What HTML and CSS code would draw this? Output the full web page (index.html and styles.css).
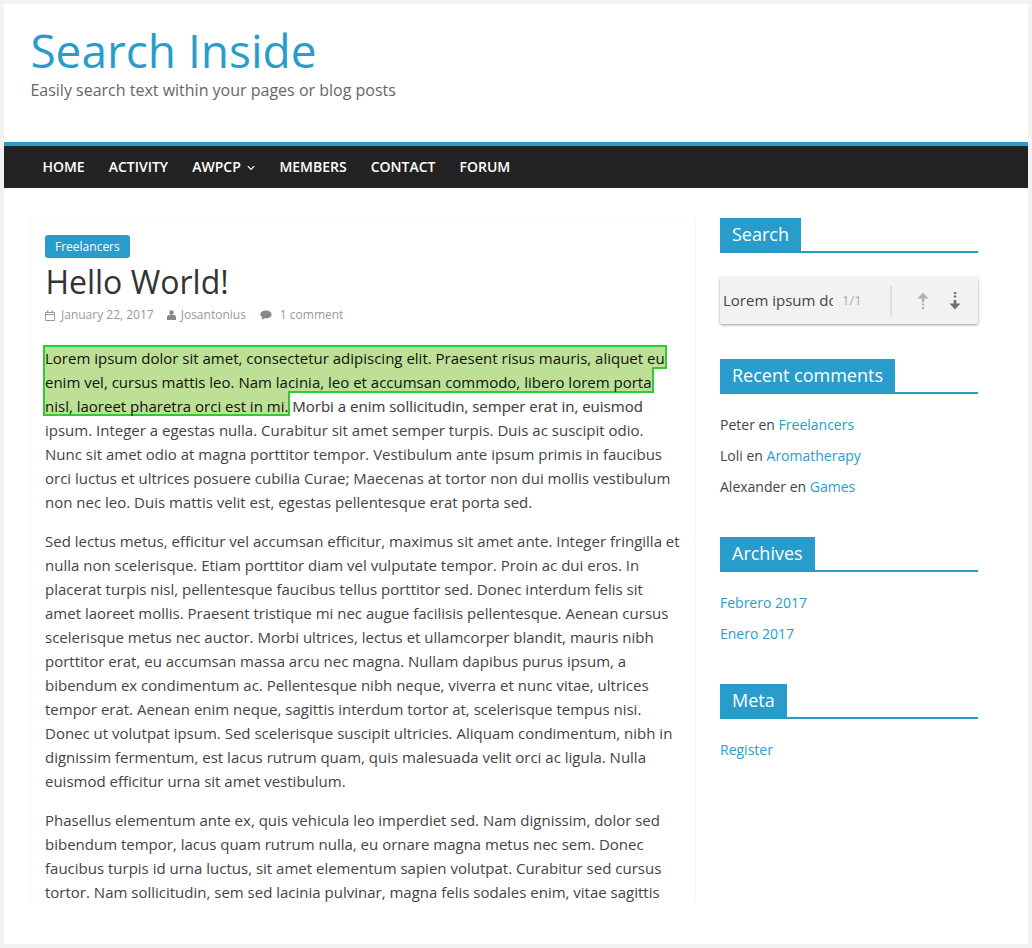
FILE: index.html
```html
<!DOCTYPE html>
<html lang="en">
<head>
<meta charset="utf-8">
<title>Search Inside</title>
<link rel="stylesheet" href="styles.css">
</head>
<body>
<div class="page">
  <header class="masthead">
    <h1 class="site-title">Search Inside</h1>
    <p class="site-desc">Easily search text within your pages or blog posts</p>
  </header>
  <nav class="nav">
    <a>HOME</a>
    <a>ACTIVITY</a>
    <a>AWPCP <svg class="caret" width="8" height="6" viewBox="0 0 8 6"><path d="M.8 1.200l3.200 3.200 3.200-3.200" fill="none" stroke="#fff" stroke-width="1.100"/></svg></a>
    <a>MEMBERS</a>
    <a>CONTACT</a>
    <a>FORUM</a>
  </nav>
  <div class="main">
    <article class="post">
      <a class="cat">Freelancers</a>
      <h2 class="post-title">Hello World!</h2>
      <div class="meta">
        <span class="meta-item meta-date"><svg width="10" height="11" viewBox="0 0 10 11"><path d="M.5 2.500h9v8h-9zM.5 4.500h9" fill="none" stroke="#999" stroke-width="1"/><path d="M2 .5h1.400v2.500H2zM6.600.5H8v2.500H6.600z" fill="#999"/></svg>January 22, 2017</span>
        <span class="meta-item meta-user"><svg width="9" height="10" viewBox="0 0 9 10"><circle cx="4.500" cy="2.600" r="2.300" fill="#888"/><path d="M0 10V7.200C0 5.800 1 5 2 5h5c1 0 2 .8 2 2.200V10z" fill="#888"/></svg>Josantonius</span>
        <span class="meta-item meta-comment"><svg width="12" height="10" viewBox="0 0 12 10"><path d="M6 .5c3.200 0 5.600 1.700 5.600 3.900S9.200 8.300 6 8.300c-.6 0-1 0-1.500-.1C3.600 9 2.500 9.500 1.200 9.600 2 8.900 2.400 8.100 2.400 7.300 1.200 6.600.4 5.600.4 4.400.4 2.200 2.800.5 6 .5z" fill="#888"/></svg>1 comment</span>
      </div>
      <div class="content">
        <p class="first">
          <svg class="hl" width="626" height="73" viewBox="0 0 626 73"><path d="M1 2H623V24H610V48H246V71H1Z" fill="#bde096" stroke="#2ecc30" stroke-width="2"/></svg>
          <span class="marked">Lorem ipsum dolor sit amet, consectetur adipiscing elit. Praesent risus mauris, aliquet eu enim vel, cursus mattis leo. Nam lacinia, leo et accumsan commodo, libero lorem porta nisl, laoreet pharetra orci est in mi.</span> <span class="tail">Morbi a enim sollicitudin, semper erat in, euismod</span> ipsum. Integer a egestas nulla. Curabitur sit amet semper turpis. Duis ac suscipit odio. Nunc sit amet odio at magna porttitor tempor. Vestibulum ante ipsum primis in faucibus orci luctus et ultrices posuere cubilia Curae; Maecenas at tortor non dui mollis vestibulum non nec leo. Duis mattis velit est, egestas pellentesque erat porta sed.
        </p>
        <p>Sed lectus metus, efficitur vel accumsan efficitur, maximus sit amet ante. Integer fringilla et nulla non scelerisque. Etiam porttitor diam vel vulputate tempor. Proin ac dui eros. In placerat turpis nisl, pellentesque faucibus tellus porttitor sed. Donec interdum felis sit amet laoreet mollis. Praesent tristique mi nec augue facilisis pellentesque. Aenean cursus scelerisque metus nec auctor. Morbi ultrices, lectus et ullamcorper blandit, mauris nibh porttitor erat, eu accumsan massa arcu nec magna. Nullam dapibus purus ipsum, a bibendum ex condimentum ac. Pellentesque nibh neque, viverra et nunc vitae, ultrices tempor erat. Aenean enim neque, sagittis interdum tortor at, scelerisque tempus nisi. Donec ut volutpat ipsum. Sed scelerisque suscipit ultricies. Aliquam condimentum, nibh in dignissim fermentum, est lacus rutrum quam, quis malesuada velit orci ac ligula. Nulla euismod efficitur urna sit amet vestibulum.</p>
        <p>Phasellus elementum ante ex, quis vehicula leo imperdiet sed. Nam dignissim, dolor sed bibendum tempor, lacus quam rutrum nulla, eu ornare magna metus nec sem. Donec faucibus turpis id urna luctus, sit amet elementum sapien volutpat. Curabitur sed cursus tortor. Nam sollicitudin, sem sed lacinia pulvinar, magna felis sodales enim, vitae sagittis</p>
      </div>
    </article>
    <aside class="sidebar">
      <section class="widget">
        <h3 class="widget-title"><span>Search</span></h3>
        <div class="finder">
          <span class="finder-query">Lorem ipsum dolor sit amet</span>
          <span class="finder-count">1/1</span>
          <span class="finder-sep"></span>
          <svg class="arrow-up" width="12" height="18" viewBox="0 0 12 18"><path d="M6 .5L11.500 6.500H7.300V10H4.700V6.500H.5Z" fill="#b3b3b3"/><path d="M6 11.500V18" stroke="#b3b3b3" stroke-width="2.400" stroke-dasharray="2 1.600"/></svg>
          <svg class="arrow-down" width="12" height="18" viewBox="0 0 12 18"><path d="M6 0V6.500" stroke="#6e6e6e" stroke-width="2.400" stroke-dasharray="2 1.600"/><path d="M6 17.500L11.500 11.500H7.300V8H4.700V11.500H.5Z" fill="#6e6e6e"/></svg>
        </div>
      </section>
      <section class="widget">
        <h3 class="widget-title"><span>Recent comments</span></h3>
        <ul class="list">
          <li>Peter en <a>Freelancers</a></li>
          <li>Loli en <a>Aromatherapy</a></li>
          <li>Alexander en <a>Games</a></li>
        </ul>
      </section>
      <section class="widget">
        <h3 class="widget-title"><span>Archives</span></h3>
        <ul class="list">
          <li><a>Febrero 2017</a></li>
          <li><a>Enero 2017</a></li>
        </ul>
      </section>
      <section class="widget">
        <h3 class="widget-title"><span>Meta</span></h3>
        <ul class="list">
          <li><a>Register</a></li>
        </ul>
      </section>
    </aside>
  </div>
</div>
</body>
</html>
```

FILE: styles.css
```css
html, body {
  margin: 0;
  height: 948px;
  overflow: hidden;
}
body {
  background: #f2f2f2;
  padding: 4px;
  box-sizing: border-box;
  font-family: "Open Sans", sans-serif;
  color: #444;
}
.page {
  height: 940px;
  background: #fff;
  overflow: hidden;
}
.masthead {
  height: 138px;
  padding: 19px 26px 0 26.4px;
  box-sizing: border-box;
}
.site-title {
  margin: 0 0 1px;
  font-size: 46px;
  line-height: 54px;
  font-weight: 400;
  color: #289dcc;
}
.site-desc {
  margin: 0;
  font-size: 16px;
  line-height: 24px;
  color: #666;
}
.nav {
  height: 46px;
  box-sizing: border-box;
  border-top: 4px solid #289dcc;
  background: #232323;
  padding: 0 0 2px 26.4px;
  display: flex;
  align-items: center;
}
.nav a {
  color: #fff;
  font-size: 14px;
  font-weight: 600;
  padding: 0 12px;
}
.caret {
  margin-left: 3px;
  vertical-align: 1px;
}
.main {
  display: flex;
  justify-content: space-between;
  padding: 30px 50px 0 26px;
}
.post {
  width: 666px;
  height: 685px;
  box-sizing: border-box;
  border-left: 1px solid #f6f6f6;
  border-right: 1px solid #f6f6f6;
  border-top: 1px solid #fafafa;
  padding: 16px 15px 0 14px;
  overflow: hidden;
}
.cat {
  display: inline-block;
  background: #289dcc;
  color: #fff;
  font-size: 12px;
  line-height: 18px;
  padding: 3px 10px 2px;
  border-radius: 3px;
  vertical-align: top;
}
.post-title {
  margin: 0;
  font-size: 32px;
  line-height: 48px;
  font-weight: 400;
  color: #333;
  padding-left: .4px;
}
.meta {
  display: flex;
  font-size: 12px;
  line-height: 18px;
  color: #999;
  height: 40px;
}
.meta-item {
  display: inline-flex;
  align-items: center;
  gap: 6px;
  height: 18px;
}
.meta-date {
  margin-right: 13px;
}
.meta-user {
  gap: 5px;
  margin-right: 14px;
}
.meta-comment {
  gap: 8px;
}
.content {
  font-size: 15px;
  line-height: 24px;
  color: #444;
}
.content p {
  margin: 0 0 15px;
}
.first {
  position: relative;
}
.hl {
  position: absolute;
  left: -2px;
  top: -2px;
  z-index: 0;
}
.marked {
  position: relative;
  z-index: 1;
  color: #111;
}
.tail {
  text-shadow: .4px 0 rgba(220, 0, 200, .22), -.4px 0 rgba(0, 190, 60, .18);
}
.sidebar {
  width: 258px;
  font-size: 14px;
  line-height: 21px;
}
.widget {
  margin-bottom: 35px;
}
.widget-title {
  margin: 0 0 15px;
  border-bottom: 2px solid #289dcc;
  font-size: 18px;
  font-weight: 400;
  line-height: 23px;
}
.widget-title span {
  display: inline-block;
  background: #289dcc;
  color: #fff;
  padding: 5px 12px;
  vertical-align: top;
}
.finder {
  height: 47px;
  margin-top: 24px;
  background: #f2f2f2;
  border-radius: 2px;
  box-shadow: 0 1px 3px rgba(0,0,0,.4);
  display: flex;
  align-items: center;
  padding-left: 3px;
}
.finder-query {
  width: 110px;
  overflow: hidden;
  white-space: nowrap;
  font-size: 15px;
  color: #444;
}
.finder-count {
  margin-left: 9px;
  font-size: 13px;
  color: #aaa;
  width: 48px;
}
.finder-sep {
  width: 2px;
  height: 30px;
  background: #e2dcdc;
}
.arrow-up {
  margin-left: 25px;
}
.arrow-down {
  margin-left: 20px;
}
.list {
  list-style: none;
  margin: 0;
  padding: 0;
  color: #444;
}
.list li {
  padding: 5px 0;
}
.list a {
  color: #289dcc;
}
```
